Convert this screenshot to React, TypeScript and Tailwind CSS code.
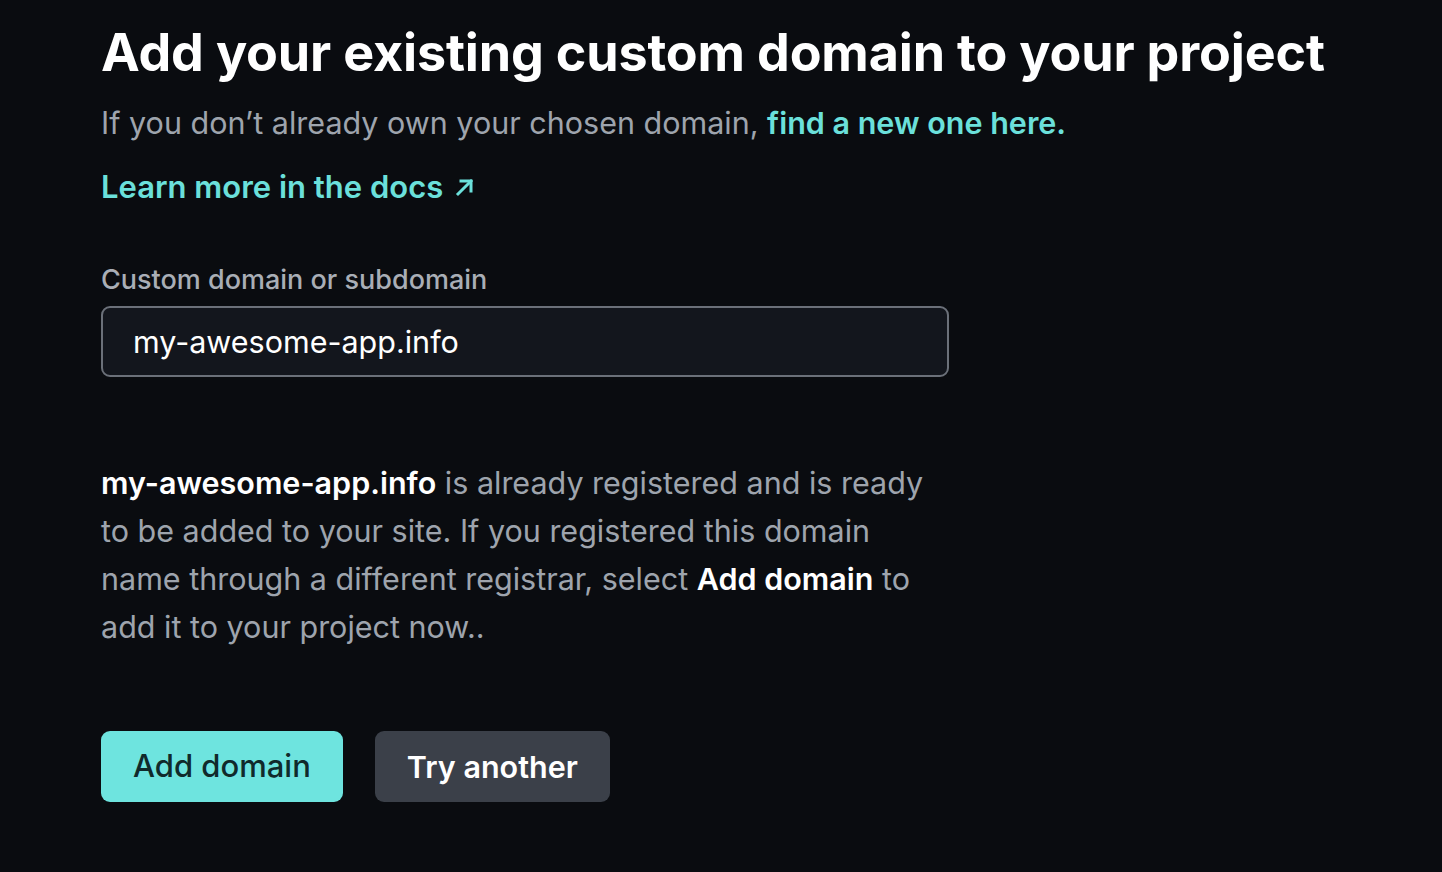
export default function App() {
  return (
    <div
      className="min-h-[872px] w-full bg-[#0a0c10] text-white"
      style={{ fontFamily: "Inter, 'Noto Sans', sans-serif" }}
    >
      <div className="pl-[101px] pt-[22px]">
        <h1 className="text-[52px] font-bold leading-[62px] tracking-[-0.003em] text-white">
          Add your existing custom domain to your project
        </h1>
        <p className="mt-[19px] text-[30.5px] leading-[40px] text-[#9ea4ad]">
          If you don’t already own your chosen domain,{" "}
          <a href="#" className="font-semibold text-[#6be0db]">
            find a new one here.
          </a>
        </p>
        <a
          href="#"
          className="mt-[24px] inline-flex items-center gap-[11px] text-[31px] font-semibold leading-[40px] text-[#6be0db]"
        >
          Learn more in the docs
          <svg width="22" height="22" viewBox="0 0 22 22" fill="none" stroke="currentColor" strokeWidth="3" strokeLinecap="square">
            <path d="M4 18 L17 5" />
            <path d="M7 5 H17 V15" />
          </svg>
        </a>

        <form className="mt-[55px] w-[848px]" onSubmit={(e) => e.preventDefault()}>
          <label htmlFor="domain" className="block text-[27px] font-medium leading-[36px] text-[#a9aeb6]">
            Custom domain or subdomain
          </label>
          <input
            id="domain"
            defaultValue="my-awesome-app.info"
            className="mt-[8px] h-[71px] w-full rounded-[9px] border-2 border-[#6b7079] bg-[#13161d] px-[30px] text-[30.5px] text-white outline-none"
          />

          <p className="mt-[82px] w-[840px] text-[30.5px] leading-[48px] text-[#9ea4ad]">
            <span className="font-semibold text-white">my-awesome-app.info</span> is already registered and is ready
            to be added to your site. If you registered this domain name through a different registrar, select{" "}
            <span className="font-semibold text-white">Add domain</span> to add it to your project now..
          </p>

          <div className="mt-[80px] flex gap-[32px]">
            <button
              type="submit"
              className="h-[71px] rounded-[9px] bg-[#6ee4df] px-[32px] text-[31px] font-medium text-[#102a2b]"
            >
              Add domain
            </button>
            <button
              type="button"
              className="h-[71px] rounded-[9px] bg-[#3b4049] px-[32px] text-[30.5px] font-semibold text-white"
            >
              Try another
            </button>
          </div>
        </form>
      </div>
    </div>
  );
}
